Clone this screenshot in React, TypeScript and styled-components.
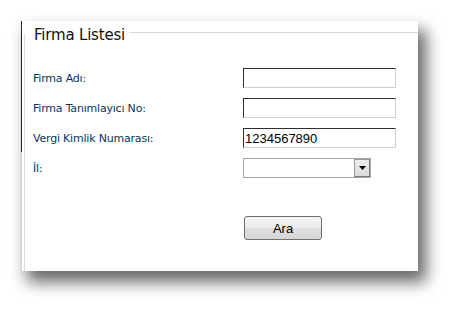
import { Fragment } from "react";
import styled, { createGlobalStyle } from "styled-components";

const GlobalStyle = createGlobalStyle`
  html, body {
    margin: 0;
    padding: 0;
    background: #ffffff;
  }
  body {
    width: 460px;
    height: 313px;
    overflow: hidden;
  }
`;

const Page = styled.div`
  width: 460px;
  height: 313px;
  box-sizing: border-box;
  padding: 21px 0 0 21px;
  background: #ffffff;
`;

const Panel = styled.div`
  width: 397px;
  height: 250px;
  overflow: hidden;
  box-sizing: border-box;
  padding-left: 3px;
  background:
    linear-gradient(#2a2a2a, #2a2a2a) left top / 1px 131px no-repeat,
    linear-gradient(#d4d4d4, #d4d4d4) left top / 1px 100% no-repeat,
    #ffffff;
  box-shadow: 7px 10px 15px 1px rgba(0, 0, 0, 0.6);
`;

const Frame = styled.fieldset`
  margin: 0;
  width: 420px;
  height: 300px;
  box-sizing: border-box;
  padding: 0 0 0 8px;
  border: 1px solid #d3dce5;
  border-top-left-radius: 4px;
`;

const Legend = styled.legend`
  margin-left: -8px;
  padding: 6px 4px 0 9px;
  font-family: "DejaVu Sans", Verdana, sans-serif;
  font-size: 15px;
  line-height: 16px;
  letter-spacing: -0.2px;
  color: #111111;
`;

const Form = styled.div`
  display: grid;
  grid-template-columns: 210px 160px;
  grid-auto-rows: 20px;
  row-gap: 10px;
  padding-top: 25px;
`;

const Label = styled.label`
  align-self: center;
  font-family: "DejaVu Sans", Verdana, sans-serif;
  font-size: 11px;
  letter-spacing: -0.2px;
  color: #0a3462;
  white-space: nowrap;
`;

const TextBox = styled.input`
  width: 153px;
  height: 20px;
  box-sizing: border-box;
  margin: 0;
  padding: 0 1px;
  border-style: solid;
  border-width: 1px;
  border-color: #2e2e2e #cfcfcf #cfcfcf #2e2e2e;
  background: #ffffff;
  font-family: "Liberation Sans", Arial, sans-serif;
  font-size: 13px;
  color: #000000;
  outline: none;
`;

const SelectBox = styled.div`
  display: flex;
  width: 128px;
  height: 20px;
  box-sizing: border-box;
  border: 1px solid #a6a6a6;
  background: #ffffff;
`;

const SelectField = styled.select`
  flex: 1;
  min-width: 0;
  appearance: none;
  border: none;
  background: transparent;
  outline: none;
  font-family: "Liberation Sans", Arial, sans-serif;
  font-size: 13px;
`;

const SelectArrow = styled.span`
  display: flex;
  align-items: center;
  justify-content: center;
  width: 16px;
  box-sizing: border-box;
  border: 1px solid #7c7c7c;
  border-top-color: #9a9a9a;
  border-left-color: #9a9a9a;
  background: linear-gradient(#eeeeee, #dcdcdc);
`;

const ButtonRow = styled.div`
  grid-column: 2;
  margin-top: 28px;
  height: 24px;
`;

const Button = styled.button`
  width: 78px;
  height: 24px;
  margin: 0 0 0 1px;
  padding: 0;
  border: 1px solid #707070;
  border-radius: 3px;
  background: linear-gradient(#f4f4f4 0%, #ececec 48%, #dedede 52%, #d6d6d6 100%);
  font-family: "Liberation Sans", Arial, sans-serif;
  font-size: 13px;
  color: #000000;
`;

const rows = [
  { label: "Firma Adı:", value: "" },
  { label: "Firma Tanımlayıcı No:", value: "" },
  { label: "Vergi Kimlik Numarası:", value: "1234567890" },
];

export default function App() {
  return (
    <Page>
      <GlobalStyle />
      <Panel>
        <Frame>
          <Legend>Firma Listesi</Legend>
          <Form>
            {rows.map((r) => (
              <Fragment key={r.label}>
                <Label>{r.label}</Label>
                <TextBox defaultValue={r.value} />
              </Fragment>
            ))}
            <Label>İl:</Label>
            <SelectBox>
              <SelectField>
                <option></option>
              </SelectField>
              <SelectArrow>
                <svg width="7" height="4" viewBox="0 0 7 4">
                  <path d="M0 0H7L3.5 4Z" fill="#000" />
                </svg>
              </SelectArrow>
            </SelectBox>
            <ButtonRow>
              <Button>Ara</Button>
            </ButtonRow>
          </Form>
        </Frame>
      </Panel>
    </Page>
  );
}
